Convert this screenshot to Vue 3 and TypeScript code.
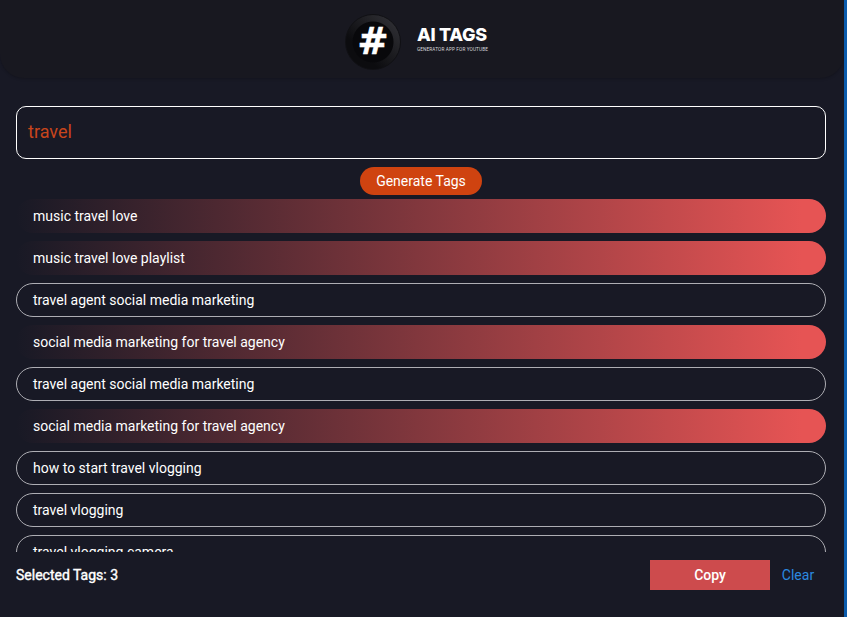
<template>
  <div class="page">
    <div class="main">
      <header class="header">
        <div class="logo">
          <div class="logo__disc"><span class="logo__hash">#</span></div>
          <div class="logo__text">
            <div class="logo__title">AI TAGS</div>
            <div class="logo__sub">GENERATOR APP FOR YOUTUBE</div>
          </div>
        </div>
      </header>

      <div class="search"><span class="search__value">{{ query }}</span></div>
      <div class="actions"><button class="generate">Generate Tags</button></div>

      <ul class="tags">
        <li v-for="(tag, i) in tags" :key="i" class="tag" :class="{ 'tag--on': tag.selected }">{{ tag.label }}</li>
      </ul>

      <footer class="footer">
        <span class="count">Selected Tags: {{ selectedCount }}</span>
        <div class="footer__btns">
          <button class="copy">Copy</button>
          <button class="clear">Clear</button>
        </div>
      </footer>
    </div>
    <div class="strip"></div>
  </div>
</template>

<script setup lang="ts">
import { computed } from "vue";

const query = "travel";

const tags = [
  { label: "music travel love", selected: true },
  { label: "music travel love playlist", selected: true },
  { label: "travel agent social media marketing", selected: false },
  { label: "social media marketing for travel agency", selected: true },
  { label: "travel agent social media marketing", selected: false },
  { label: "social media marketing for travel agency", selected: true },
  { label: "how to start travel vlogging", selected: false },
  { label: "travel vlogging", selected: false },
  { label: "travel vlogging camera", selected: false },
];

// the shot says 3 even with 4 rows lit, so keep it fixed
const selectedCount = computed(() => 3);
</script>

<style>
html,
body {
  margin: 0;
  background: #181925;
}
</style>

<style scoped>
.page {
  display: flex;
  width: 847px;
  height: 617px;
  overflow: hidden;
  font-family: Roboto, "Liberation Sans", sans-serif;
  color: #fff;
  background: #181925;
}

.main {
  flex: 1;
  min-width: 0;
  display: flex;
  flex-direction: column;
}

.strip {
  width: 3px;
  background: #0b5cad;
}

.header {
  height: 78px;
  flex: none;
  display: flex;
  justify-content: center;
  align-items: center;
  background: #181820;
  border-radius: 0 0 24px 24px;
  box-shadow: 0 1px 3px rgba(0, 0, 0, 0.2);
}

.logo {
  display: flex;
  align-items: center;
  gap: 16px;
  margin-right: 11px;
  margin-top: 5px;
}

.logo__disc {
  width: 56px;
  height: 56px;
  box-sizing: border-box;
  border-radius: 50%;
  display: flex;
  align-items: center;
  justify-content: center;
  background:
    radial-gradient(circle at 50% 50%, #08080b 0 20px, transparent 21px),
    linear-gradient(45deg, #0c0c0f 30%, #2c2c31 85%);
  border: 1px solid #101014;
}

.logo__hash {
  font-family: "DejaVu Sans", sans-serif;
  font-size: 37px;
  font-weight: 700;
  line-height: 1;
  -webkit-text-stroke: 0.6px #fff;
}

.logo__text {
  margin-bottom: 4px;
}

.logo__title {
  font-family: Inter, "Liberation Sans", sans-serif;
  font-size: 18px;
  font-weight: 800;
  line-height: 20px;
  white-space: nowrap;
  letter-spacing: -0.3px;
}

.logo__sub {
  font-size: 4.7px;
  line-height: 8px;
  white-space: nowrap;
  margin-top: 1px;
  letter-spacing: 0.12px;
  color: #d8d8dc;
}

.search {
  margin: 28px 18px 0 16px;
  height: 53px;
  box-sizing: border-box;
  border: 1px solid #fff;
  border-radius: 10px;
  display: flex;
  align-items: center;
  padding: 0 11px 2px;
  font-size: 18px;
}

.search__value {
  color: #c8451c;
}

.actions {
  display: flex;
  justify-content: center;
  margin-top: 8px;
  padding-right: 2px;
}

.generate {
  width: 122px;
  height: 28px;
  border: none;
  padding: 0;
  border-radius: 14px;
  background: #cf4310;
  color: #fff;
  font: 400 14px Roboto, sans-serif;
}

.tags {
  list-style: none;
  margin: 4px 18px 0 16px;
  padding: 0;
  height: 353px;
  overflow: hidden;
  display: flex;
  flex-direction: column;
  gap: 8px;
}

.tag {
  flex: none;
  height: 34px;
  box-sizing: border-box;
  border: 1px solid #aeaeb4;
  border-radius: 17px;
  padding: 0 16px;
  display: flex;
  align-items: center;
  font-size: 14px;
}

.tag--on {
  border: none;
  padding: 0 17px;
  background: linear-gradient(90deg, #181925 0%, #e65454 97%);
}

.footer {
  flex: 1;
  display: flex;
  align-items: flex-start;
  justify-content: space-between;
  margin: 8px 18px 0 16px;
}

.count {
  font-size: 14px;
  font-weight: 400;
  line-height: 30px;
  -webkit-text-stroke: 0.4px #fff;
}

.footer__btns {
  display: flex;
  align-items: center;
}

.copy {
  width: 120px;
  height: 30px;
  border: none;
  padding: 0;
  background: #cd4b4d;
  color: #fff;
  font: 500 14px Roboto, sans-serif;
}

.clear {
  width: 56px;
  height: 30px;
  border: none;
  padding: 0;
  background: none;
  color: #2b8ae0;
  font: 400 14px Roboto, sans-serif;
}
</style>
